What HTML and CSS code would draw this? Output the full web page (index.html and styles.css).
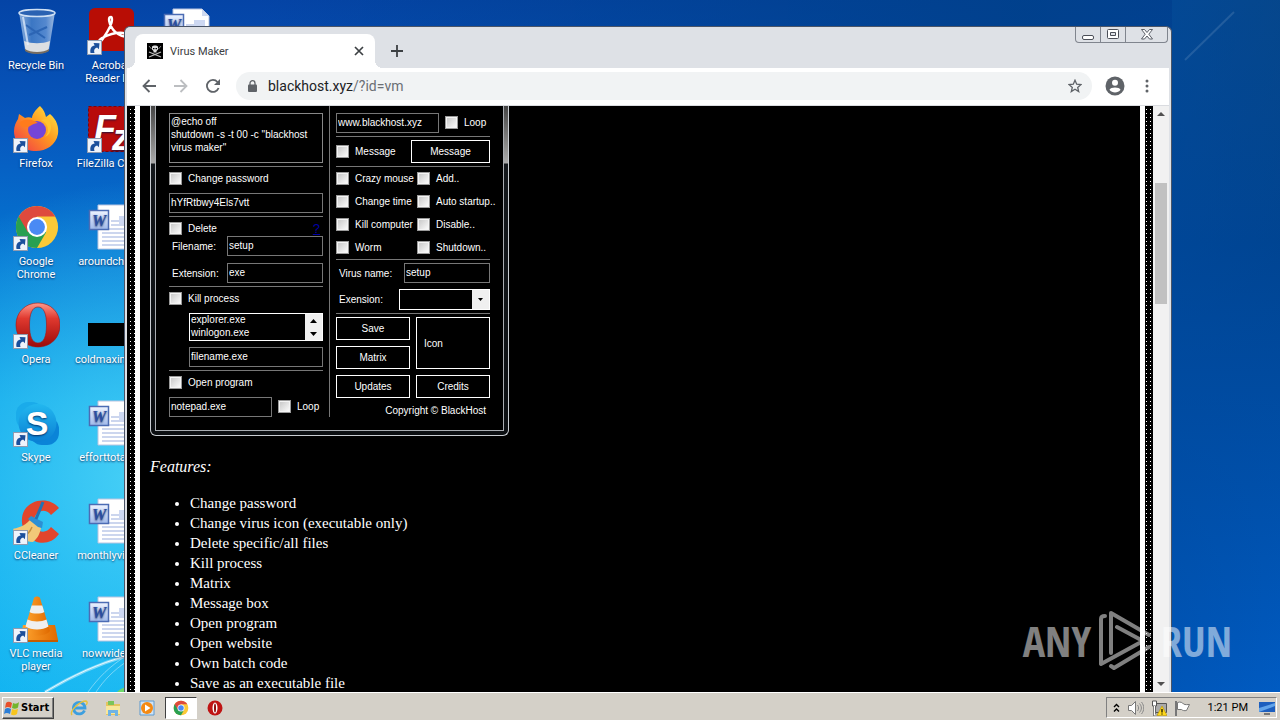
FILE: index.html
```html
<!DOCTYPE html>
<html lang="en">
<head>
<meta charset="utf-8">
<title>Virus Maker</title>
<link rel="stylesheet" href="styles.css">
</head>
<body>
<svg class="defs" aria-hidden="true">
  <defs>
    <linearGradient id="gOpera" x1="0" y1="0" x2="0" y2="1"><stop offset="0" stop-color="#ff9a8c"/><stop offset=".35" stop-color="#e0392f"/><stop offset="1" stop-color="#9c0a0a"/></linearGradient>
    <linearGradient id="gFox" x1="1" y1="0" x2="0" y2="1"><stop offset="0" stop-color="#fff04a"/><stop offset=".45" stop-color="#ff9a1f"/><stop offset="1" stop-color="#f0304e"/></linearGradient>
    <linearGradient id="gSky" x1="0" y1="0" x2="0" y2="1"><stop offset="0" stop-color="#22b7ef"/><stop offset="1" stop-color="#0a80d4"/></linearGradient>
    <linearGradient id="gCone" x1="0" y1="0" x2="1" y2="0"><stop offset="0" stop-color="#ffa530"/><stop offset="1" stop-color="#e06a00"/></linearGradient>
    <linearGradient id="gBin" x1="0" y1="0" x2="1" y2="0"><stop offset="0" stop-color="#b9d2ee"/><stop offset=".35" stop-color="#4d86cc"/><stop offset=".75" stop-color="#6f9edb"/><stop offset="1" stop-color="#cfe0f3"/></linearGradient>
    <linearGradient id="gWord" x1="0" y1="0" x2="0" y2="1"><stop offset="0" stop-color="#eef3ff"/><stop offset="1" stop-color="#9fb9ea"/></linearGradient>
    <symbol id="link" viewBox="0 0 15 15"><rect x=".5" y=".5" width="14" height="14" fill="#eef3fb" stroke="#8f9bb0"/><path d="M3.500 13c-.8-4.500 1-7 4.200-7.400L6.500 3l6 .3-.6 5.900-1.800-1.800C7.500 8 6.500 10 7.500 13z" fill="#1b4f9c"/></symbol>
    <symbol id="chrome" viewBox="0 0 48 48"><circle cx="24" cy="24" r="22" fill="#fbc938"/><path d="M24 24 4.950 13A22 22 0 0 0 24 46L33.500 29.500z" fill="#28a052"/><path d="M24 2A22 22 0 0 0 4.950 13l9.500 16.500L24 13h19.050A22 22 0 0 0 24 2z" fill="#de4a3d"/><circle cx="24" cy="24" r="10.500" fill="#fff"/><circle cx="24" cy="24" r="8.300" fill="#4a8af4"/></symbol>
    <symbol id="opera" viewBox="0 0 48 48"><path fill-rule="evenodd" fill="url(#gOpera)" stroke="#a01515" stroke-width=".6" d="M24 2c13 0 22 9.500 22 22s-9 22-22 22S2 36.500 2 24 11 2 24 2zm0 4c-6 0-8.500 7-8.500 18S18 42 24 42s8.500-7 8.500-18S30 6 24 6z"/></symbol>
    <symbol id="word" viewBox="0 0 48 48"><path d="M11 1h29l7 7v37H11z" fill="#fff" stroke="#b8c4e0"/><path d="M40 1v7h7z" fill="#cfdaf0"/><path d="M24 17h19M24 21h19M15 25h28M15 29h28M15 33h28M15 37h28M15 41h28" stroke="#9aaede" stroke-width="1.200"/><path d="M32 12h11v8H32z" fill="#cdd8f2"/><rect x="2.500" y="6.500" width="19" height="19" fill="url(#gWord)" stroke="#4c6cb4" stroke-width="1.500"/><text x="12" y="22" text-anchor="middle" class="word-mark">W</text></symbol>
  </defs>
</svg>

<div class="screen">
  <main class="desktop">
    <svg class="wallpaper" viewBox="0 0 1280 692" preserveAspectRatio="none" aria-hidden="true">
      <g fill="none" stroke="#fff">
        <path d="M45 692C75 674 98 664 126 656" stroke-width="3" stroke-opacity=".45"/>
        <path d="M45 692C75 674 98 664 126 656" stroke-width="1" stroke-opacity=".8"/>
        <path d="M88 692c10-14 22-26 38-36M96 692c8-12 18-22 30-30" stroke-opacity=".4"/>
        <path d="M1185 60 1234 12" stroke-width="2" stroke-opacity=".12"/>
      </g>
      <path d="M117 692c3-3 6-4 9-5v5z" fill="#6fd86a"/>
    </svg>

    <nav class="shortcuts">
      <a class="shortcut" href="#"><svg viewBox="0 0 48 48"><path d="M7 4h36l-6 38c-4 5-20 5-24 0z" fill="url(#gBin)" fill-opacity=".75"/><path d="M12 33c8 3 18 3 26 0l-1.500 9c-4 4-19 4-23 0z" fill="#dcdfe2"/><path d="M13 41c5 4 19 4 24 0v2c-5 4-19 4-24 0z" fill="#756b60"/><ellipse cx="25" cy="5" rx="18" ry="3.500" fill="#2a62b2" stroke="#cfe0f4" stroke-width="1.500"/><path d="m14 17 10 7 11-5M17 27l7-3 9 6" stroke="#2c65b4" stroke-width="2" fill="none"/><path d="m11 9 5 28" stroke="#e8f2ff" stroke-opacity=".7" stroke-width="2"/></svg><span>Recycle Bin</span></a>
      <a class="shortcut" href="#"><svg viewBox="0 0 48 48"><rect x="2" y="0" width="45" height="43" rx="6" fill="#b80d05"/><path d="M24 9c-5 0 0 13 7 17 8 5 12 1 5-1-7-1-15 2-21 5-6 4-3 7 2-1 4-6 8-13 8-17 0-2 0-3-1-3z" fill="none" stroke="#fff" stroke-width="2.400"/><use href="#link" x="0" y="32" width="15" height="15"/></svg><span>Acrobat Reader DC</span></a>
      <a class="shortcut" href="#"><svg viewBox="0 0 48 48"><path d="M28 0c4 4 5 7 6 11l4-3c7 6 9 13 8 20-2 11-12 17-22 17C11 45 2 37 2 25c0-5 2-9 4-12l1-5 6 4c2-1 5-1 7 0 0-3 3-8 8-12z" fill="url(#gFox)"/><circle cx="25" cy="24" r="9" fill="#7445d8"/><path d="M8 16c6-4 12-3 18 1-5 0-8 4-11 4-4 1-8-1-7-5z" fill="#ff7b1c"/><path d="M29 14c8 3 9 12 4 17 7-3 8-13 3-18z" fill="#ffc42e"/><use href="#link" x="1" y="32" width="15" height="15"/></svg><span>Firefox</span></a>
      <a class="shortcut" href="#"><svg viewBox="0 0 48 48"><rect x="1.500" y=".5" width="45" height="45" fill="#b80b0b" stroke="#8c0000" stroke-dasharray="3 2"/><text x="7" y="35" class="fz-mark">F</text><text x="25" y="44" class="fz-mark">z</text><use href="#link" x="0" y="32" width="15" height="15"/></svg><span>FileZilla Client</span></a>
      <a class="shortcut" href="#"><svg viewBox="0 0 48 48"><use href="#chrome" x="2" y="0" width="46" height="46"/><use href="#link" x="1" y="32" width="15" height="15"/></svg><span>Google Chrome</span></a>
      <a class="shortcut" href="#"><svg viewBox="0 0 48 48"><use href="#word"/></svg><span>aroundchil.rtf</span></a>
      <a class="shortcut" href="#"><svg viewBox="0 0 48 48"><use href="#opera" x="2" y="-1" width="48" height="48"/><use href="#link" x="1" y="32" width="15" height="15"/></svg><span>Opera</span></a>
      <a class="shortcut" href="#"><svg viewBox="0 0 48 48"><path d="M1 21h47v23H1z"/></svg><span>coldmaxim.jpg</span></a>
      <a class="shortcut" href="#"><svg viewBox="0 0 48 48"><rect x="4" y="2" width="28" height="28" rx="12" fill="#1aabea"/><rect x="18" y="17" width="29" height="28" rx="12" fill="#0a84d8"/><circle cx="25.500" cy="23" r="19" fill="url(#gSky)"/><text x="25" y="35" text-anchor="middle" class="skype-mark">S</text><use href="#link" x="1" y="32" width="15" height="15"/></svg><span>Skype</span></a>
      <a class="shortcut" href="#"><svg viewBox="0 0 48 48"><use href="#word"/></svg><span>efforttotal.rtf</span></a>
      <a class="shortcut" href="#"><svg viewBox="0 0 48 48"><path d="M47 10C37-3 12 1 10 20c-2 22 24 34 37 16l-8-7c-6 9-18 4-17-7 1-9 11-13 17-5z" fill="#e2452c"/><path d="M18 22c-6 7-14 8-17 9 4 8 12 13 20 13 5-4 7-9 8-14z" fill="#f2c878"/><path d="m16 21 3-3 12 6-1 6-4-1z" fill="#2c8fd4"/><path d="m24 21 7-17" stroke="#2273b4" stroke-width="3"/><path d="M20 29c-2 5-5 8-9 10" stroke="#c68f3c" stroke-width="1.500" fill="none"/><use href="#link" x="1" y="32" width="15" height="15"/></svg><span>CCleaner</span></a>
      <a class="shortcut" href="#"><svg viewBox="0 0 48 48"><use href="#word"/></svg><span>monthlyvie.rtf</span></a>
      <a class="shortcut" href="#"><svg viewBox="0 0 48 48"><path d="M11 29h32l3 15H8z" fill="url(#gCone)"/><path d="M8 44h38v2H8z" fill="#c65c00"/><path d="M22 2c1-2 5-2 6 0l10 33c-4 6-22 6-26 0z" fill="url(#gCone)"/><path d="m19.600 9.500 10.700 0 2 6.500c-3 2-12 2-14.700 0zM15.500 23.500c5 2.500 14 2.500 19 0l2 7c-6 4-17 4-23 0z" fill="#efefef"/><use href="#link" x="1" y="32" width="15" height="15"/></svg><span>VLC media player</span></a>
      <a class="shortcut" href="#"><svg viewBox="0 0 48 48"><use href="#word"/></svg><span>nowwide.rtf</span></a>
      <a class="shortcut" href="#" aria-label="Document"><svg viewBox="0 0 48 48"><use href="#word"/></svg></a>
    </nav>

    <section class="window" aria-label="Virus Maker">
      <header class="tabstrip">
        <div class="tab">
          <svg class="favicon" viewBox="0 0 16 16"><path d="M0 0h16v16H0z"/><path d="m2 14 12-5M14 14 2 9" stroke="#bbb" stroke-width="1.300"/><path d="m2 3 2.500 3M14 3l-2.500 3" stroke="#888"/><path d="M5 3.500C6 2 10 2 11 3.500v3L9.500 8v1.500h-3V8L5 6.500z" fill="#ddd"/><path d="M6 5h1.500v1.300H6zM8.500 5H10v1.300H8.500z"/></svg>
          <span class="tab-title">Virus Maker</span>
          <button class="icon-btn" aria-label="Close tab"><svg width="10" height="10" viewBox="0 0 10 10"><path d="m1 1 8 8M9 1 1 9" stroke="#3c4043" stroke-width="1.700"/></svg></button>
        </div>
        <button class="icon-btn new-tab" aria-label="New tab"><svg width="12" height="12" viewBox="0 0 12 12"><path d="M6 0v12M0 6h12" stroke="#3c4043" stroke-width="1.800"/></svg></button>
        <div class="controls">
          <button aria-label="Minimize"><svg width="13" height="12" viewBox="0 0 13 12"><rect x=".5" y="6.500" width="11" height="4" rx="1.500" fill="#fff" stroke="#4b4f58"/></svg></button>
          <button aria-label="Restore"><svg width="12" height="11" viewBox="0 0 12 11"><rect x=".5" y=".5" width="11" height="9" rx="1" fill="#fff" stroke="#4b4f58"/><path d="M3.500 3.500h5v3h-5z" fill="#dee1e6" stroke="#4b4f58"/></svg></button>
          <button class="close" aria-label="Close"><svg width="12" height="11" viewBox="0 0 12 11"><path d="M.5.500h3L6 3.500l2.500-3h3L7.800 5.200l3.700 4.800h-3L6 7 3.500 10h-3l3.700-4.800z" fill="#fff" stroke="#4b4f58" stroke-width=".9"/></svg></button>
        </div>
      </header>
      <div class="toolbar">
        <button class="icon-btn nav" aria-label="Back"><svg width="14" height="14" viewBox="0 0 14 14"><path d="M14 7H1.500M7.500 1l-6 6 6 6" fill="none" stroke="#5f6368" stroke-width="1.800"/></svg></button>
        <button class="icon-btn nav" aria-label="Forward"><svg width="14" height="14" viewBox="0 0 14 14"><path d="M0 7h12.500M6.500 1l6 6-6 6" fill="none" stroke="#bcbec1" stroke-width="1.800"/></svg></button>
        <button class="icon-btn nav" aria-label="Reload"><svg width="14" height="14" viewBox="0 0 14 14"><path d="M12.600 9A6 6 0 1 1 11.500 3" fill="none" stroke="#5f6368" stroke-width="1.800"/><path d="M14 0v6H8z" fill="#5f6368"/></svg></button>
        <div class="omnibox">
          <svg width="10" height="12" viewBox="0 0 10 12"><rect y="4.500" width="9" height="7.500" rx="1" fill="#5f6368"/><path d="M2 5V3.200a2.500 2.500 0 0 1 5 0V5" fill="none" stroke="#5f6368" stroke-width="1.300"/></svg>
          <span class="url">blackhost.xyz<span class="path">/?id=vm</span></span>
          <svg width="14" height="14" viewBox="0 0 14 14"><path d="m7 1.200 1.700 4 4.300.4-3.300 2.800 1 4.200L7 10.300l-3.700 2.300 1-4.200L1 5.600l4.300-.4z" fill="none" stroke="#5f6368" stroke-width="1.300"/></svg>
        </div>
        <button class="icon-btn" aria-label="Profile"><svg width="20" height="20" viewBox="0 0 20 20"><circle cx="10" cy="10" r="9.500" fill="#5f6368"/><circle cx="10" cy="6.800" r="3" fill="#fff"/><path d="M4.500 13.800c1-3 10-3 11 0-2.500 3.600-8.500 3.600-11 0z" fill="#fff"/></svg></button>
        <button class="icon-btn menu" aria-label="Menu"><svg width="4" height="14" viewBox="0 0 4 14" fill="#5f6368"><circle cx="2" cy="2" r="1.500"/><circle cx="2" cy="7" r="1.500"/><circle cx="2" cy="12" r="1.500"/></svg></button>
      </div>

      <div class="viewport">
        <div class="page">
          <article class="article">
            <div class="frame"><form class="maker">
              <div class="col left">
                <textarea aria-label="Batch code" spellcheck="false">@echo off
shutdown -s -t 00 -c "blackhost virus maker"</textarea>
                <hr>
                <label class="check"><input type="checkbox">Change password</label>
                <input class="field spaced" type="text" aria-label="Password" value="hYfRtbwy4Els7vtt">
                <hr>
                <div class="row apart"><label class="check">
                  <input type="checkbox">Delete</label><a class="help" href="#">?</a></div>
                <div class="row pair"><label for="fn">Filename:</label><input class="field" id="fn" type="text" value="setup"></div>
                <div class="row pair second"><label for="ext">Extension:</label><input class="field" id="ext" type="text" value="exe"></div>
                <hr>
                <label class="check"><input type="checkbox">Kill process</label>
                <div class="listbox">
                  <select size="2" aria-label="Processes"><option>explorer.exe</option><option>winlogon.exe</option></select>
                  <div class="spin"><svg width="7" height="4" viewBox="0 0 7 4"><path d="M0 4 3.500 0 7 4z"/></svg><svg width="7" height="4" viewBox="0 0 7 4"><path d="m0 0 3.500 4L7 0z"/></svg></div>
                </div>
                <input class="field indent" type="text" aria-label="Process" value="filename.exe">
                <hr>
                <label class="check"><input type="checkbox">Open program</label>
                <div class="row with-loop spaced"><input class="field" type="text" aria-label="Program" value="notepad.exe"><label class="check"><input type="checkbox">Loop</label></div>
              </div>
              <div class="divider"></div>
              <div class="col right">
                <div class="row with-loop"><input class="field" type="text" aria-label="Website" value="www.blackhost.xyz"><label class="check"><input type="checkbox">Loop</label></div>
                <hr>
                <div class="row message"><label class="check"><input type="checkbox">Message</label><button class="btn" type="button">Message</button></div>
                <hr>
                <div class="options">
                  <label class="check"><input type="checkbox">Crazy mouse</label><label class="check"><input type="checkbox">Add..</label>
                  <label class="check"><input type="checkbox">Change time</label><label class="check"><input type="checkbox">Auto startup..</label>
                  <label class="check"><input type="checkbox">Kill computer</label><label class="check"><input type="checkbox">Disable..</label>
                  <label class="check"><input type="checkbox">Worm</label><label class="check"><input type="checkbox">Shutdown..</label>
                </div>
                <hr>
                <div class="row pair name"><label for="vn">Virus name:</label><input class="field" id="vn" type="text" value="setup"></div>
                <div class="row pair kind"><label for="ex">Exension:</label><span class="dropdown"><select id="ex"><option></option></select><span class="drop-arrow"><svg width="5" height="3" viewBox="0 0 5 3"><path d="M0 0h5L2.500 3z"/></svg></span></span></div>
                <hr>
                <div class="buttons">
                  <button class="btn" type="button">Save</button><button class="btn icon" type="button">Icon</button>
                  <button class="btn" type="button">Matrix</button>
                  <button class="btn" type="button">Updates</button><button class="btn" type="button">Credits</button>
                </div>
                <p class="copyright">Copyright © BlackHost</p>
              </div>
            </form></div>
            <p class="heading"><i>Features:</i></p>
            <ul class="features">
              <li>Change password</li><li>Change virus icon (executable only)</li><li>Delete specific/all files</li><li>Kill process</li><li>Matrix</li><li>Message box</li><li>Open program</li><li>Open website</li><li>Own batch code</li><li>Save as an executable file</li>
            </ul>
          </article>
        </div>
        <div class="scrollbar">
          <svg width="8" height="4" viewBox="0 0 8 4"><path d="M0 4 4 0l4 4z"/></svg>
          <div class="track"><div class="thumb"></div></div>
          <svg width="8" height="4" viewBox="0 0 8 4"><path d="m0 0 4 4 4-4z"/></svg>
        </div>
      </div>
    </section>

    <div class="watermark">
      <span>ANY</span>
      <svg width="54" height="64" viewBox="0 0 54 64" fill="none" stroke="#fff" stroke-width="4" stroke-linejoin="round" stroke-linecap="round"><path d="M12 44V4l38 22M18 18l26 14-42 23V10q0-3 4-3M50 38 15 59l-3-2"/></svg>
      <span>RUN</span>
    </div>
  </main>

  <footer class="taskbar">
    <button class="start"><svg width="16" height="16" viewBox="0 0 16 16"><path d="M2 3c2-2 4-1 6 0L7 8C5 7 3 6.500 1 8z" fill="#e8502b"/><path d="M9 3c2 1 4 1 6-1l-1 5.500c-2 1.500-4 1.500-6 .5z" fill="#74b52c"/><path d="M1 9c2-1.500 4-1 6 0l-1 5c-2-1-4-1.500-6 0z" fill="#2c7ed6"/><path d="M8 9c2 1 4 1 6-.5L13 14c-2 1.500-4 1.500-6 .5z" fill="#f7c51e"/></svg>Start</button>
    <button class="task" aria-label="Internet Explorer"><svg viewBox="0 0 18 18"><path d="M14.500 11.500A5.800 5.800 0 1 1 15 9H5" fill="none" stroke="#3d9fdf" stroke-width="2.800"/><path d="M2 16C-1 12 10 2 16 2c2 1 1 3 0 4" fill="none" stroke="#e6c23c" stroke-width="1.400"/></svg></button>
    <button class="task" aria-label="Explorer"><svg viewBox="0 0 18 18"><path d="M2 3h6l1 2h7v11H2z" fill="#e5c45e"/><path d="M4 2h6v4H4z" fill="#7cc45a"/><path d="M2 7h14v8H2z" fill="#f8e79c"/><path d="M4 11h10v6h-3v-3H7v3H4z" fill="#6fb3e4"/></svg></button>
    <button class="task" aria-label="Media Player"><svg viewBox="0 0 18 18"><path d="M2 2h14v14H2z" fill="#cfe3f6" stroke="#5d9ad0"/><circle cx="9" cy="9" r="6" fill="#f48a14"/><path d="m7 5.500 5.500 3.500L7 12.500z" fill="#fff"/></svg></button>
    <button class="task active" aria-label="Chrome"><svg viewBox="0 0 18 18"><use href="#chrome" x="1" y="1" width="16" height="16"/></svg></button>
    <button class="task" aria-label="Opera"><svg viewBox="0 0 18 18"><circle cx="9" cy="9" r="7.500" fill="#bf1414"/><ellipse cx="9" cy="9" rx="2.500" ry="5.500" fill="#fff"/><ellipse cx="9" cy="9" rx="1" ry="4.500" fill="#8c0b0b"/></svg></button>
    <div class="tray">
      <svg width="7" height="10" viewBox="0 0 7 10"><path d="m1 4 2.500-2.500L6 4M1 8.500 3.500 6 6 8.500" fill="none" stroke="#000" stroke-width="1.400"/></svg>
      <svg width="17" height="16" viewBox="0 0 17 16"><path d="M1.500 5.500h3l4-4v13l-4-4h-3z" fill="#fff" stroke="#777"/><path d="M10.500 5c1.500 2 1.500 4 0 6M12.500 3.500c2.500 3 2.500 6 0 9M14.500 2c3 4 3 8 0 12" fill="none" stroke="#888"/></svg>
      <svg width="16" height="16" viewBox="0 0 16 16"><path d="M4.500 3.500h11v9h-11z" fill="#aaa" stroke="#555"/><path d="M1.500 1v5h4V1z" fill="#fff" stroke="#555"/><path d="M3.500 6v9h4" fill="none" stroke="#555" stroke-width="2.500"/><path d="M3.500 6v9h4" fill="none" stroke="#fff" stroke-width="1.200"/><path d="m11 6 5 9.500H6z" fill="#ffd819" stroke="#b89500" stroke-width=".6"/><path d="M11 9v3.500M11 13.500v1" stroke="#000" stroke-width="1.200"/></svg>
      <svg width="17" height="16" viewBox="0 0 17 16"><path d="M2 1v15" stroke="#777" stroke-width="2"/><path d="M3.500 2.500c3-1 5 0 6 1.500 2 1 4 .5 6 .5l-3 6c-2 .5-4 0-5-1H3.500z" fill="#fff" stroke="#777"/></svg>
      <time>1:21 PM</time>
      <svg width="16" height="14" viewBox="0 0 16 14"><path d="M0 1h16v10H0z" fill="#1d5fbe"/><path d="M0 7 16 2v3L0 11z" fill="#63a5ea"/><path d="M5 12h6v2H5z" fill="#777"/></svg>
    </div>
  </footer>
</div>
</body>
</html>
```
FILE: styles.css
```css
* { box-sizing: border-box; }
body { margin: 0; font: 11px/13px Roboto, sans-serif; }
button, input, select, textarea { font: inherit; margin: 0; border-radius: 0; }
svg { display: block; flex: none; }
.defs { position: absolute; width: 0; height: 0; }

.screen { display: flex; flex-direction: column; height: 100vh; overflow: hidden; }
.desktop {
  position: relative;
  flex: 1;
  min-height: 0;
  overflow: hidden;
  background:
    radial-gradient(ellipse 320px 300px at 150px 480px, rgba(80, 214, 248, .9), rgba(40, 180, 240, 0)),
    linear-gradient(90deg, rgba(0, 60, 140, 0) 20%, rgba(0, 64, 138, .9) 80%, rgba(0, 62, 130, .6)),
    linear-gradient(#0444a6, #0757bd 18%, #0478d4 38%, #009de8 58%, #00a5ee 80%, #09aff0);
}
.desktop::after {
  content: "";
  position: absolute;
  inset: 0 0 0 auto;
  width: 108px;
  background: linear-gradient(100deg, rgba(0, 74, 160, .6), rgba(0, 64, 130, 0)), linear-gradient(#084583, #00438f 35%, #0050ab 70%, #005bc2);
}
.wallpaper { position: absolute; inset: 0; width: 100%; height: 100%; z-index: 1; }

.shortcuts {
  position: relative;
  z-index: 2;
  display: grid;
  grid-template-columns: repeat(3, 72px);
  grid-auto-rows: 98px;
  column-gap: 3px;
  padding-top: 8px;
}
.shortcut { display: flex; flex-direction: column; align-items: center; gap: 3px; color: #fff; text-align: center; text-decoration: none; text-shadow: 0 1px 2px rgba(0, 20, 70, .8); }
.shortcut:nth-child(odd) { grid-column: 1; }
.shortcut:nth-child(even) { grid-column: 2; }
.shortcut:last-child { grid-column: 3; grid-row: 1; }
.shortcut svg { width: 48px; height: 48px; }
.word-mark { font: italic bold 16px "Liberation Serif", serif; fill: #2b4ea0; }
.fz-mark { font: italic bold 36px "Liberation Sans", sans-serif; fill: #fff; }
.skype-mark { font: bold 34px "Liberation Sans", sans-serif; fill: #fff; }

.window {
  position: absolute;
  z-index: 3;
  inset: 26px 108px 0 124px;
  display: flex;
  flex-direction: column;
  border: solid #4a5568;
  border-width: 1px 1px 0;
  border-radius: 6px 6px 0 0;
  padding: 0 2px;
  background: #dee1e6;
}
.tabstrip { display: flex; align-items: flex-end; height: 41px; padding: 0 1px 0 8px; }
.tab { position: relative; display: flex; align-items: center; gap: 7px; width: 240px; height: 34px; padding: 0 11px 0 12px; border-radius: 8px 8px 0 0; background: #fff; color: #3c4043; }
.tab::before, .tab::after { content: ""; position: absolute; bottom: 0; width: 8px; height: 8px; }
.tab::before { right: 100%; background: radial-gradient(circle at 0 0, transparent 8px, #fff 8px); }
.tab::after { left: 100%; background: radial-gradient(circle at 100% 0, transparent 8px, #fff 8px); }
.favicon { width: 16px; height: 16px; }
.tab-title { flex: 1; }
.icon-btn { display: flex; padding: 0; border: 0; background: none; }
.new-tab { margin: 0 auto 11px 16px; }
.controls { align-self: flex-start; display: flex; height: 16px; border: 1px solid #80858e; border-top: 0; border-radius: 0 0 4px 4px; }
.controls button { display: flex; align-items: center; justify-content: center; width: 25px; padding: 0; border: 0; border-right: 1px solid #80858e; background: none; }
.controls .close { width: 41px; border-right: 0; }
.toolbar { display: flex; align-items: center; height: 38px; padding: 0 20px 2px 15px; border-bottom: 1px solid #dadce0; background: #fff; }
.nav { margin-right: 18px; }
.omnibox { flex: 1; display: flex; align-items: center; gap: 10px; height: 28px; margin-right: 13px; margin-left: -2px; padding: 0 10px 0 12px; border-radius: 14px; background: #f1f3f4; font-size: 14px; line-height: 18px; }
.url { flex: 1; color: #202124; }
.path { color: #6b6f74; }
.menu { margin-left: 20px; }

.viewport { flex: 1; display: flex; min-height: 0; }
.page {
  flex: 1;
  padding: 0 8px;
  overflow: hidden;
  background-image: linear-gradient(90deg, #000 3px, transparent 3px), linear-gradient(#000 3px, #fff 3px);
  background-size: 4px 4px;
}
.article { min-height: 100%; padding: 0 10px; border: solid #fff; border-width: 0 5px; background: #000; color: #fff; font: 15px/20px "Liberation Serif", serif; }

.frame {
  width: 359px;
  padding: 0 4px 4px;
  border: 1px solid #c9cdd2;
  border-top: 0;
  border-radius: 0 0 6px 6px;
  background: linear-gradient(#444 0, #aaa 57px, #14181c 58px, #0c0f12);
}
.maker { display: flex; padding: 7px 13px 13px; border: 1px solid #a9adb2; border-top: 0; background: #000; font: 10px/13px "Liberation Sans", sans-serif; }
.col { width: 154px; }
.divider { width: 1px; margin: -7px 6px 0; background: #777; }
.maker hr { height: 1px; margin: 3px 0; border: 0; background: #777; }
.maker textarea { display: block; width: 100%; height: 50px; padding: 1px; border: 1px solid #888; background: #000; color: #fff; resize: none; overflow: hidden; }
.field { display: block; width: 100%; min-width: 0; height: 20px; padding: 0 1px 1px; border: 1px solid #777; background: #000; color: #fff; }
.check { display: flex; align-items: center; gap: 6px; height: 16px; white-space: nowrap; }
.check input { appearance: none; flex: none; width: 13px; height: 13px; border: 1px solid #9a9a9a; background: linear-gradient(135deg, #c4c4c4, #fff); outline: 1px solid #f4f4f4; outline-offset: -2px; }
.maker .spaced { margin-top: 7px; }
.row { display: flex; align-items: center; }
.apart { justify-content: space-between; height: 16px; padding-right: 3px; }
.help { color: #0000a8; font-size: 13px; }
.pair { justify-content: space-between; padding-left: 3px; }
.pair .field { width: 96px; }
.second { margin-top: 7px; }
.listbox { display: flex; height: 28px; margin: 7px 0 6px 20px; border: 1px solid #fff; }
.listbox select { appearance: none; flex: 1; width: 100%; height: 26px; padding: 0; border: 0; background: #000; color: #fff; overflow: hidden; scrollbar-width: none; }
.listbox option { min-height: 13px; padding: 0 1px; line-height: 13px; }
.spin { display: flex; flex-direction: column; justify-content: space-around; align-items: center; width: 17px; background: #f0f0f0; }
.maker .indent { width: 134px; margin-left: 20px; }
.with-loop { gap: 6px; }
.with-loop .field { width: 103px; }
.with-loop .check { height: 20px; padding-bottom: 2px; }
.message { justify-content: space-between; }
.btn { height: 23px; padding: 0; border: 1px solid #fff; background: #000; color: #fff; }
.message .btn { width: 79px; }
.options { display: grid; grid-template-columns: 75px auto; column-gap: 6px; row-gap: 7px; margin: 0 0 4px; }
.name .field { width: 86px; }
.kind { margin-top: 6px; }
.dropdown { position: relative; display: flex; width: 91px; height: 21px; }
.dropdown select { appearance: none; width: 100%; border: 1px solid #fff; background: #000; color: #fff; }
.drop-arrow { position: absolute; inset: 1px 1px 1px auto; display: flex; align-items: center; justify-content: center; width: 17px; background: #f0f0f0; pointer-events: none; }
.buttons { display: grid; grid-template-columns: 1fr 1fr; gap: 6px; }
.icon { grid-row: span 2; height: auto; padding-left: 7px; text-align: left; }
.copyright { margin: 6px 4px 0; text-align: right; }

.heading { margin: 21px 0 16px; font-size: 16px; }
.features { margin: 0; padding-left: 40px; }

.scrollbar { display: flex; flex-direction: column; align-items: center; width: 16px; padding: 6px 0; background: #f1f1f1; fill: #505050; }
.track { flex: 1; width: 12px; margin: 6px 0; display: flex; flex-direction: column; }
.track::before { content: ""; flex: 61; }
.track::after { content: ""; flex: 372; }
.thumb { flex: 121; background: #c1c1c1; }

.watermark { position: absolute; z-index: 4; right: 48px; bottom: 19px; display: flex; align-items: center; gap: 8px; color: #fff; opacity: .5; font: 300 42px/48px "Open Sans Condensed", "Liberation Sans Narrow", Lato, sans-serif; }

.taskbar { display: flex; align-items: center; height: 28px; padding: 2px 3px 0 2px; border-top: 1px solid #fff; background: #d4d0c8; }
.start { display: flex; align-items: center; gap: 1px; height: 22px; width: 52px; padding: 0 1px; border: 1px solid; border-color: #fff #404040 #404040 #fff; box-shadow: inset -1px -1px #808080; background: #d4d0c8; font: bold 11px/16px "DejaVu Sans Condensed", "DejaVu Sans", sans-serif; margin-right: 9px; }
.task { display: flex; align-items: center; justify-content: center; width: 32px; height: 22px; margin-right: 2px; padding: 0; border: 1px solid transparent; background: none; }
.task svg { width: 18px; height: 18px; }
.active { border-color: #404040 #fff #fff #404040; background: #fff; }
.tray { display: flex; align-items: center; gap: 7px; height: 21px; margin-left: auto; padding: 0 1px 0 6px; border: 1px solid; border-color: #808080 #fff #fff #808080; }
.tray time { margin: 0 4px 0 10px; }
```
